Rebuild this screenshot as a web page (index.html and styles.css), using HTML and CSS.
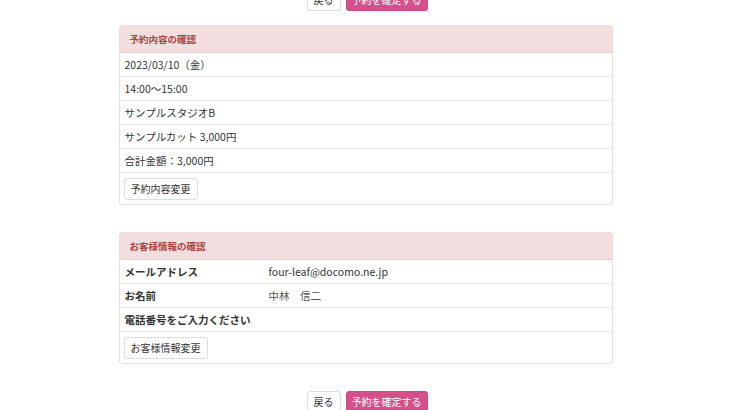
FILE: index.html
```html
<!DOCTYPE html>
<html lang="ja">
<head>
    <meta charset="UTF-8">
    <meta name="viewport" content="width=device-width, initial-scale=1.0">
    <title>予約確認</title>
    <link rel="stylesheet" href="styles.css">
</head>
<body>

    <div class="page">
        <div class="actions actions-top">
            <button class="btn">戻る</button>
            <button class="btn btn-primary">予約を確定する</button>
        </div>

        <div class="panel">
            <div class="panel-heading">予約内容の確認</div>
            <div class="panel-row">2023/03/10（金）</div>
            <div class="panel-row">14:00～15:00</div>
            <div class="panel-row">サンプルスタジオB</div>
            <div class="panel-row">サンプルカット 3,000円</div>
            <div class="panel-row">合計金額：3,000円</div>
            <div class="panel-footer">
                <button class="btn">予約内容変更</button>
            </div>
        </div>

        <div class="panel">
            <div class="panel-heading">お客様情報の確認</div>
            <div class="panel-row info-row">
                <span class="label">メールアドレス</span>
                <span>four-leaf@docomo.ne.jp</span>
            </div>
            <div class="panel-row info-row">
                <span class="label">お名前</span>
                <span class="value">中林　信二</span>
            </div>
            <div class="panel-row info-row">
                <span class="label">電話番号をご入力ください</span>
                <span></span>
            </div>
            <div class="panel-footer">
                <button class="btn">お客様情報変更</button>
            </div>
        </div>

        <div class="actions actions-bottom">
            <button class="btn">戻る</button>
            <button class="btn btn-primary">予約を確定する</button>
        </div>
    </div>

</body>
</html>
```

FILE: styles.css
```css
body {
    margin: 0;
    font-family: 'Noto Sans CJK JP', 'Noto Sans', sans-serif;
    font-size: 10.5px;
    color: #333;
    background: #fff;
    overflow: hidden;
}

.page {
    width: 494px;
    margin: -11px auto 0;
}

.actions {
    display: flex;
    justify-content: center;
    gap: 5px;
    padding-left: 3px;
}

.actions-top {
    margin-bottom: 14px;
}

.actions-bottom {
    margin-top: 25px;
}

.btn {
    font-family: inherit;
    font-size: 10px;
    color: #333;
    background: #fff;
    border: 1px solid #ddd;
    border-radius: 3px;
    height: 22px;
    padding: 0 6px;
    line-height: 20px;
    cursor: pointer;
}

.btn-primary {
    background: #d4508a;
    border-color: #d04a85;
    color: #fff;
    padding: 0 5px;
}

.panel {
    border: 1px solid #f0dcdf;
    border-radius: 3px;
    margin-bottom: 27px;
}

.panel:last-of-type {
    margin-bottom: 0;
}

.panel-heading {
    background: #f2dede;
    color: #a94442;
    font-weight: bold;
    font-size: 9.5px;
    height: 26px;
    line-height: 26px;
    padding: 0 10px;
    border-bottom: 1px solid #ebccd1;
}

.panel-row {
    height: 23px;
    line-height: 23px;
    padding: 0 5px;
    border-bottom: 1px solid #f3e6e8;
}

.info-row {
    display: grid;
    grid-template-columns: 144px 1fr;
}

.info-row .label {
    font-weight: bold;
}

.info-row .value {
    color: #555;
}

.panel-footer {
    padding: 5px 4px 4px;
}
```
